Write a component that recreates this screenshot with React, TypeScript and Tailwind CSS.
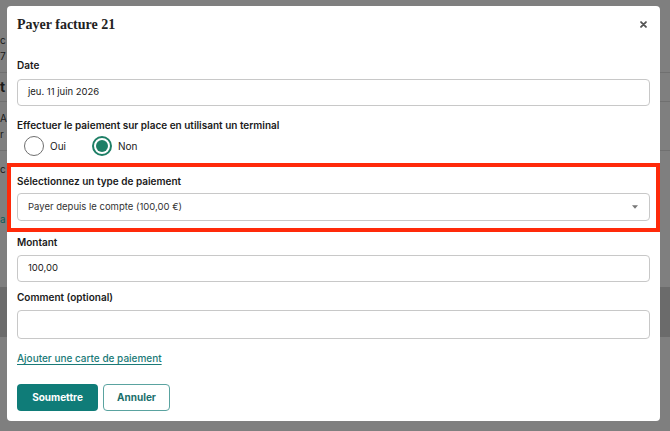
import React from "react";

const sans = { fontFamily: "Inter, 'Noto Sans', sans-serif" };

export default function App() {
  return (
    <div className="relative w-[670px] h-[431px] overflow-hidden bg-[#7f7f7f]" style={sans}>
      {/* background page (dimmed) */}
      <div className="flex flex-col text-[10px] text-[#1a1a1a] pt-[32px]">
        <div className="h-[16px] leading-[16px]">c</div>
        <div className="h-[16px] leading-[16px]">7</div>
        <div className="h-[1px] bg-[#707070] mt-[8px]" />
        <div className="h-[28px] leading-[28px] text-[14px] font-bold">t</div>
        <div className="h-[1px] bg-[#707070]" />
        <div className="h-[16px] leading-[16px] mt-[8px]">A</div>
        <div className="h-[16px] leading-[16px]">r</div>
        <div className="h-[1px] bg-[#707070] mt-[8px]" />
        <div className="h-[16px] leading-[16px] mt-[10px]">c</div>
        <div className="h-[16px] leading-[16px] mt-[34px] text-[#0d5a58]">a</div>
        <div className="h-[60px]" />
        <div className="h-[50px] bg-[#6b6b6b]" />
      </div>

      {/* modal */}
      <div className="absolute left-[7px] top-[6px] w-[653px] h-[415px] bg-white rounded-[4px] px-[10px] pt-[8px] flex flex-col text-[#1a1a1a]">
        <div className="flex items-center justify-between h-[20px]">
          <div
            className="text-[14px] font-bold text-[#222]"
            style={{ fontFamily: "'Liberation Serif', 'DejaVu Serif', serif" }}
          >
            Payer facture 21
          </div>
          <svg width="7" height="7" viewBox="0 0 10 10" className="mr-[3px]">
            <path d="M1.5 1.5 L8.5 8.5 M8.5 1.5 L1.5 8.5" stroke="#555" strokeWidth="2.6" strokeLinecap="round" />
          </svg>
        </div>

        <label className="mt-[23px] text-[10px] leading-[16px] font-semibold">Date</label>
        <div className="mt-[6px] h-[27px] border border-[#c8c8c8] rounded-[4px] flex items-center px-[10px] text-[9.5px]">
          jeu. 11 juin 2026
        </div>

        <label className="mt-[11px] text-[10px] leading-[16px] font-semibold">
          Effectuer le paiement sur place en utilisant un terminal
        </label>
        <div className="mt-[3px] h-[20px] flex items-center text-[10px]">
          <div className="ml-[7px] w-[20px] h-[20px] rounded-full border-[1.5px] border-[#6f6f6f]" />
          <span className="ml-[6px]">Oui</span>
          <div className="ml-[26px] w-[20px] h-[20px] rounded-full border-[2px] border-[#1e7f66] flex items-center justify-center">
            <div className="w-[12px] h-[12px] rounded-full bg-[#1e7f66]" />
          </div>
          <span className="ml-[6px]">Non</span>
        </div>

        <div className="mt-[7px] -mx-[10px] border-[4px] border-[#ff2a0a] px-[6px] pt-[6px] pb-[7px] flex flex-col">
          <label className="text-[10px] leading-[16px] font-semibold">Sélectionnez un type de paiement</label>
          <div className="mt-[4px] h-[28px] border border-[#c8c8c8] rounded-[4px] flex items-center justify-between px-[10px] text-[9.5px] text-[#333]">
            <span>Payer depuis le compte (100,00 €)</span>
            <svg width="6" height="4" viewBox="0 0 7 4" className="mr-[1px]">
              <path d="M0 0 L7 0 L3.5 4 Z" fill="#777" />
            </svg>
          </div>
        </div>

        <label className="mt-[2px] text-[10px] leading-[16px] font-semibold">Montant</label>
        <div className="mt-[5px] h-[27px] border border-[#c8c8c8] rounded-[4px] flex items-center px-[10px] text-[9.5px]">
          100,00
        </div>

        <label className="mt-[7px] text-[10px] leading-[16px] font-semibold">Comment (optional)</label>
        <div className="mt-[5px] h-[29px] border border-[#c8c8c8] rounded-[4px]" />

        <a className="mt-[11px] text-[10px] leading-[16px] font-medium text-[#1a7a77] underline underline-offset-2 self-start">
          Ajouter une carte de paiement
        </a>

        <div className="mt-[18px] flex gap-[5px]">
          <button className="w-[81px] h-[27px] rounded-[4px] bg-[#0f7c78] text-white text-[10px] font-bold">
            Soumettre
          </button>
          <button className="w-[67px] h-[27px] rounded-[4px] border border-[#5aa3a0] text-[#1a6f6c] text-[10px] font-bold bg-white">
            Annuler
          </button>
        </div>
      </div>
    </div>
  );
}
